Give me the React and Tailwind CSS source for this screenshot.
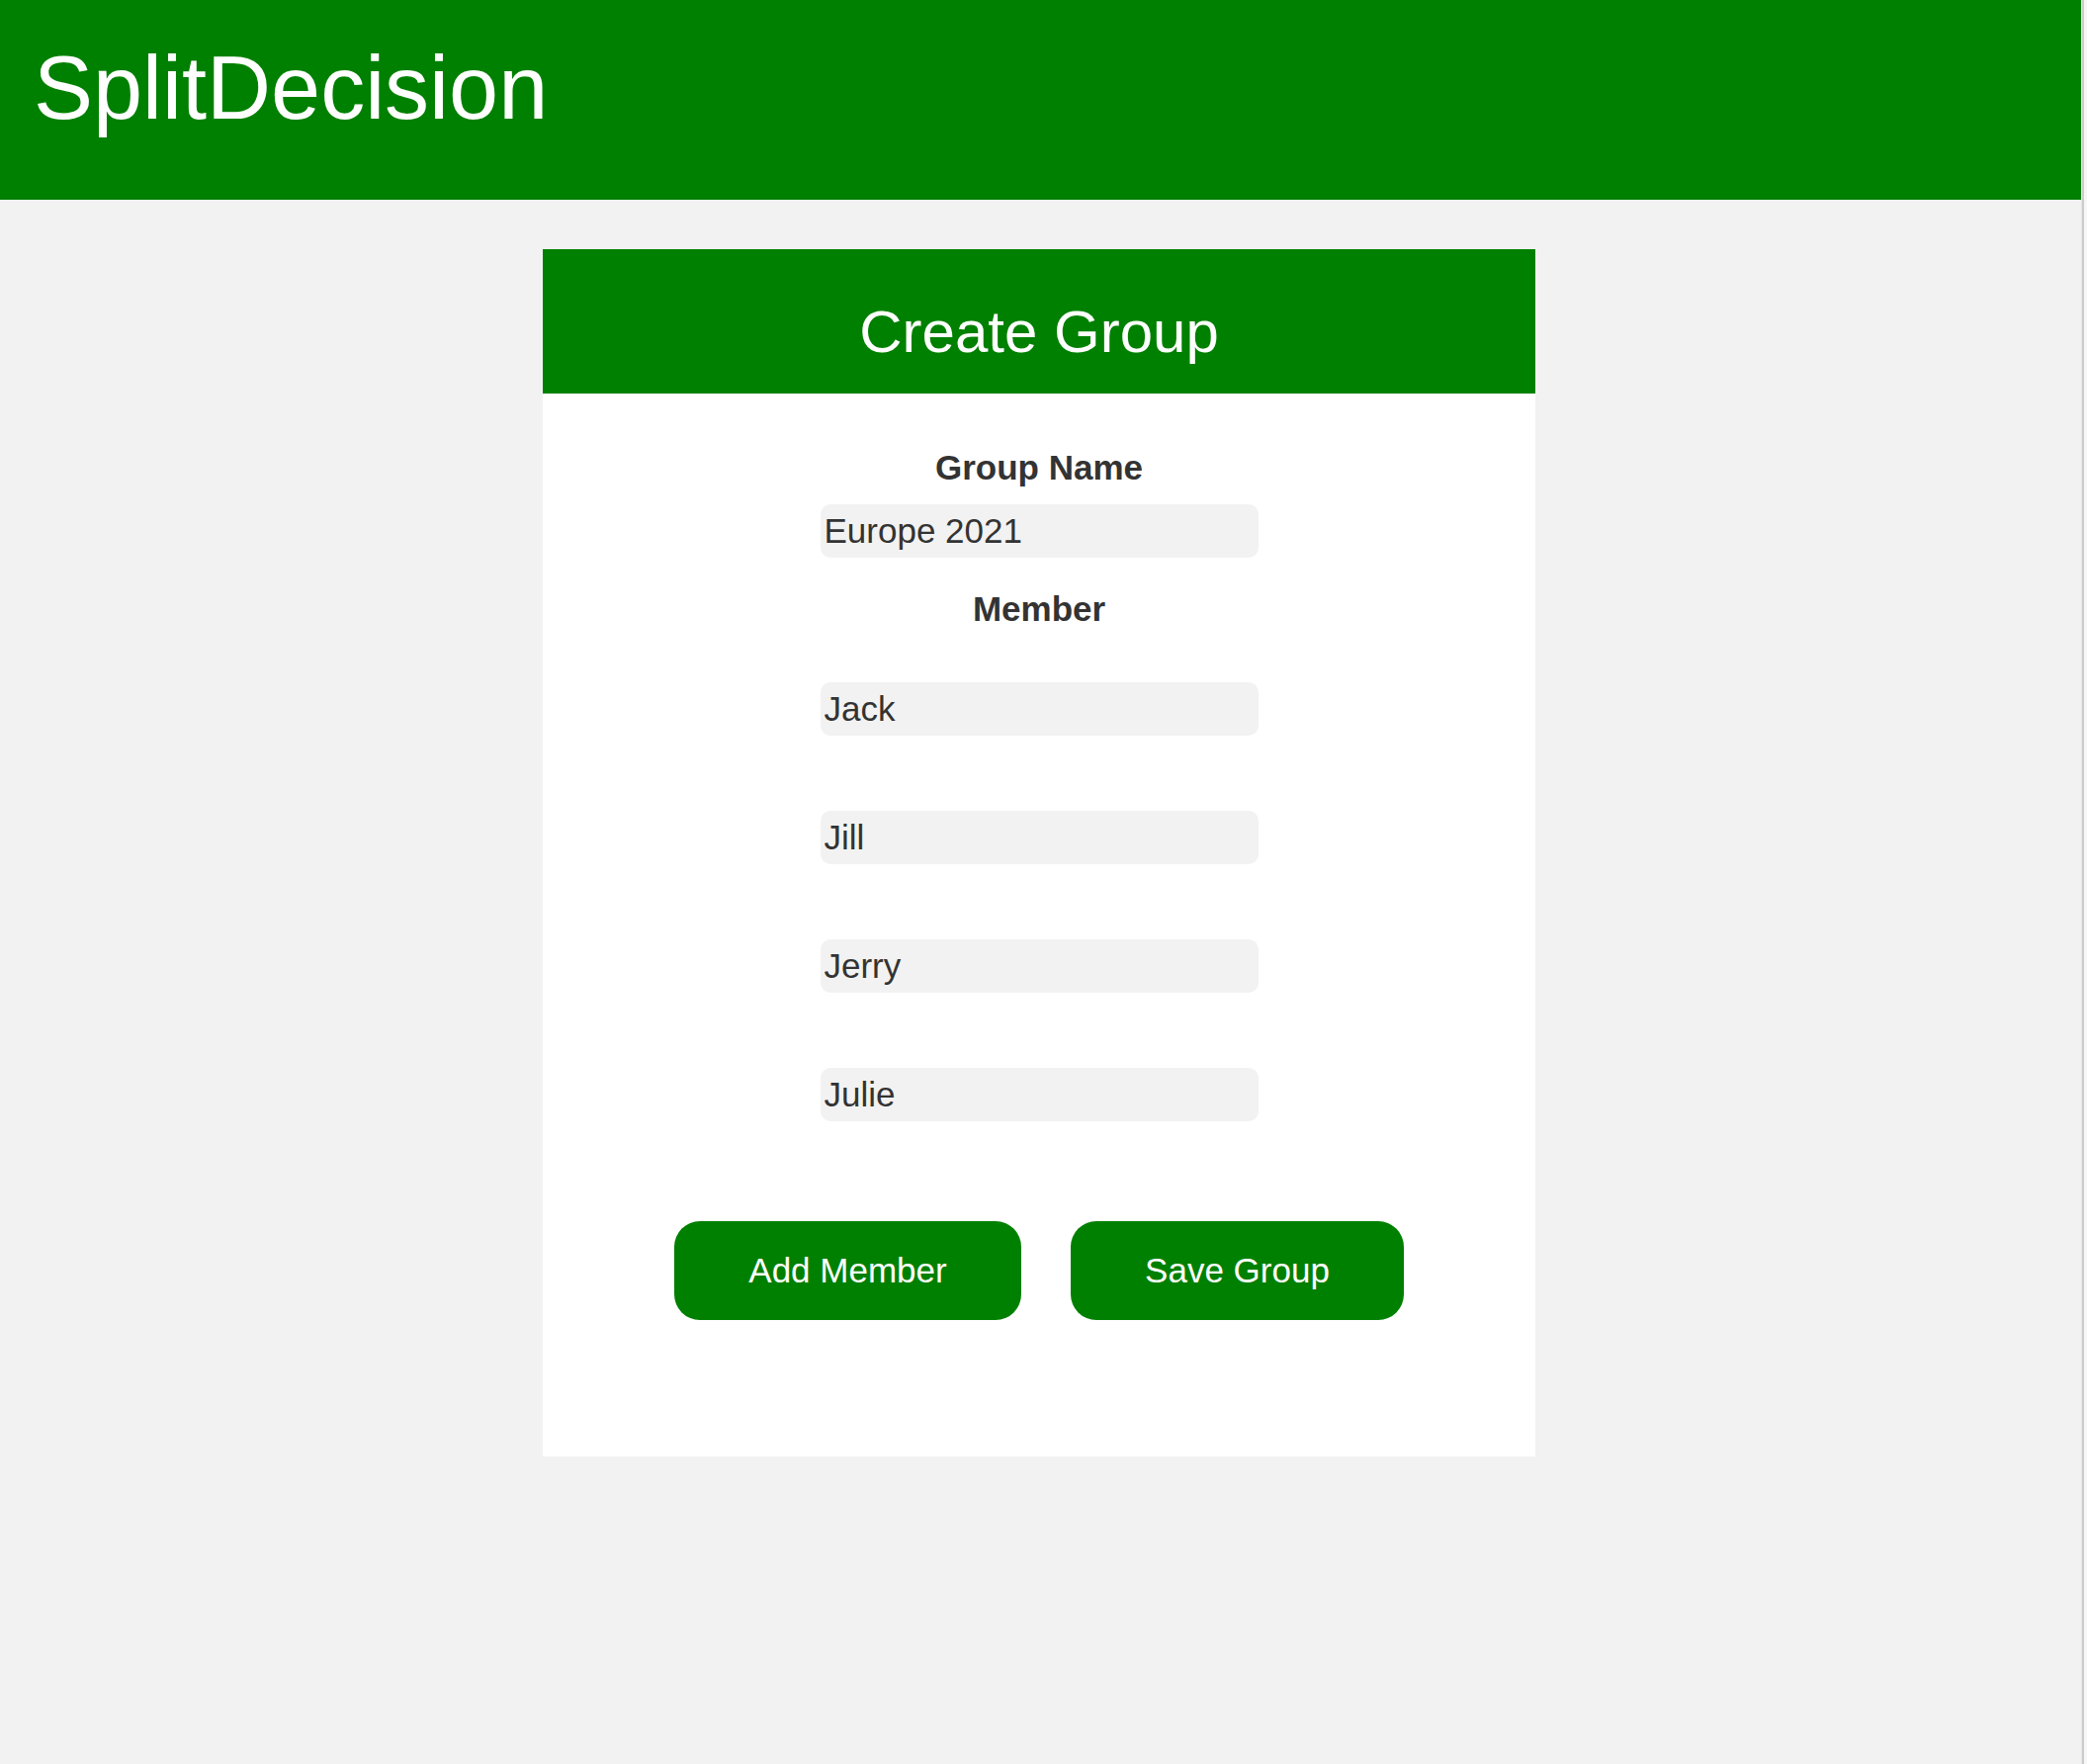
const members = ['Jack', 'Jill', 'Jerry', 'Julie']

function Field({ value }) {
  return (
    <input
      type="text"
      defaultValue={value}
      className="h-[54px] w-[443px] rounded-[10px] bg-[#f2f2f2] px-[4px] text-[35px] text-[#333] outline-none"
    />
  )
}

export default function App() {
  return (
    <div className="flex min-h-[1784px] w-full bg-[#f2f2f2] font-['Liberation_Sans',Arial,sans-serif]">
      <div className="flex-1">
        {/* Top bar */}
        <header className="h-[202px] bg-[#008000] pl-[34px] pt-[44px]">
          <h1 className="text-[90px] leading-none font-normal text-white">SplitDecision</h1>
        </header>

        {/* Card */}
        <div className="flex justify-center pt-[50px] pr-[3px]">
          <div className="w-[1004px] bg-white">
            <div className="h-[146px] bg-[#008000] pt-[54px] text-center">
              <h2 className="text-[60px] leading-none font-normal text-white">Create Group</h2>
            </div>

            <div className="flex flex-col items-center pt-[57px] pb-[138px]">
              <label className="text-[35px] leading-none font-bold text-[#333]">Group Name</label>
              <div className="mt-[20px]">
                <Field value="Europe 2021" />
              </div>
              <label className="mt-[34px] text-[35px] leading-none font-bold text-[#333]">Member</label>
              <div className="mt-[57px] flex flex-col gap-[76px]">
                {members.map(m => (
                  <Field key={m} value={m} />
                ))}
              </div>

              <div className="mt-[101px] flex gap-[50px]">
                <button className="flex h-[100px] w-[351px] items-center justify-center rounded-[26px] bg-[#008000] text-[35px] text-white">
                  Add Member
                </button>
                <button className="flex h-[100px] w-[337px] items-center justify-center rounded-[26px] bg-[#008000] text-[35px] text-white">
                  Save Group
                </button>
              </div>
            </div>
          </div>
        </div>
      </div>

      {/* Right edge strip */}
      <div className="flex w-[6px] shrink-0">
        <div className="w-[1px] bg-[#e6e6e6]" />
        <div className="w-[2px] bg-[#cdcdcd]" />
        <div className="flex-1 bg-[#f7f7f7]" />
      </div>
    </div>
  )
}
